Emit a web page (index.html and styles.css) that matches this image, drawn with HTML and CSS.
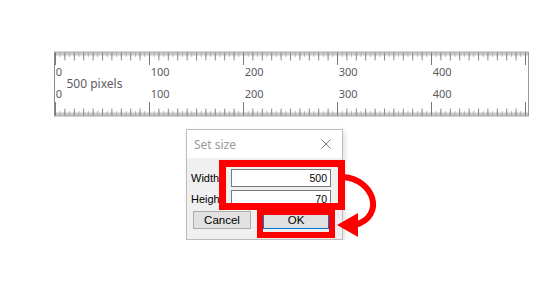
FILE: index.html
```html
<!DOCTYPE html>
<html lang="en">
  <head>
    <meta charset="UTF-8" />
    <title>Ruler - Set size</title>
    <link rel="stylesheet" href="styles.css">
  </head>
  <body>
    <div class="ruler">
      <svg width="475" height="66" viewBox="0 0 475 66">
        <defs>
          <pattern id="tickTiny" x="1" y="0" width="0.94" height="66" patternUnits="userSpaceOnUse">
            <rect x="0" y="1" width="0.5" height="3.5" fill="#9a9a9a" />
            <rect x="0" y="61.5" width="0.5" height="3.5" fill="#9a9a9a" />
          </pattern>
          <pattern id="tickFive" x="1" y="0" width="4.7" height="66" patternUnits="userSpaceOnUse">
            <rect x="0" y="1" width="0.7" height="5" fill="#a0a0a0" />
            <rect x="0" y="60" width="0.7" height="5" fill="#a0a0a0" />
          </pattern>
          <pattern id="tickTen" x="1" y="0" width="9.4" height="66" patternUnits="userSpaceOnUse">
            <rect x="0" y="1" width="1" height="8.5" fill="#8c8c8c" />
            <rect x="0" y="57.5" width="1" height="7.5" fill="#8c8c8c" />
          </pattern>
          <pattern id="tickHundred" x="1" y="0" width="94" height="66" patternUnits="userSpaceOnUse">
            <rect x="0" y="1" width="1" height="13" fill="#7a7a7a" />
            <rect x="0" y="51" width="1" height="14" fill="#7a7a7a" />
          </pattern>
        </defs>
        <rect x="0" y="0" width="475" height="66" fill="#fff" />
        <rect x="0" y="0" width="475" height="66" fill="url(#tickTiny)" />
        <rect x="0" y="0" width="475" height="66" fill="url(#tickFive)" />
        <rect x="0" y="0" width="475" height="66" fill="url(#tickTen)" />
        <rect x="0" y="0" width="475" height="66" fill="url(#tickHundred)" />
        <rect x="0" y="1" width="1" height="64" fill="#8a8a8a" />
        <rect x="474" y="1" width="1" height="64" fill="#9a9a9a" />
        <rect x="0" y="64.5" width="475" height="1" fill="#a5a5a5" />
        <rect x="0" y="0.5" width="475" height="1" fill="#b0b0b0" />

        <g class="tick-label">
          <text x="1.7" y="25">0</text>
          <text x="96.7" y="25">100</text>
          <text x="190.7" y="25">200</text>
          <text x="284.7" y="25">300</text>
          <text x="378.7" y="25">400</text>
          <text x="1.7" y="47">0</text>
          <text x="96.7" y="47">100</text>
          <text x="190.7" y="47">200</text>
          <text x="284.7" y="47">300</text>
          <text x="378.7" y="47">400</text>
        </g>
        <text class="size-label" x="12.5" y="37">500 pixels</text>
      </svg>
    </div>

    <div class="dialog">
      <div class="titlebar">
        <span class="title">Set size</span>
        <svg class="close" width="10" height="10" viewBox="0 0 10 10">
          <path d="M0.5 0.5 L9.5 9.5 M9.5 0.5 L0.5 9.5" stroke="#7c7c7c" stroke-width="1" fill="none" />
        </svg>
      </div>
      <div class="dlg-body">
        <div class="row">
          <span class="field-label">Width:</span>
          <div class="field">500</div>
        </div>
        <div class="row">
          <span class="field-label">Height:</span>
          <div class="field">70</div>
        </div>
        <div class="buttons">
          <button class="btn">Cancel</button>
          <button class="btn btn-default">OK</button>
        </div>
      </div>

      <!-- annotation marks -->
      <div class="mark mark-fields"></div>
      <div class="mark mark-ok"></div>
      <svg class="arrow" width="45" height="85" viewBox="335 160 45 85">
        <path d="M343 177 C374 179 386 216 355 225" stroke="#ff0000" stroke-width="6" fill="none" />
        <polygon points="337,225 358,213 358,237" fill="#ff0000" />
      </svg>
    </div>
  </body>
</html>
```

FILE: styles.css
```css
/* Page */
body {
  margin: 0;
  background-color: #fff;
  font-family: "Noto Sans", "Liberation Sans", sans-serif;
}

/* Ruler strip */
.ruler {
  margin: 51px 0 0 54px;
  width: 475px;
  height: 66px;
}

.ruler svg {
  display: block;
}

.tick-label text {
  font-family: "Noto Sans", sans-serif;
  font-size: 11px;
  fill: #5c5a62;
}

.size-label {
  font-family: "Noto Sans", sans-serif;
  font-size: 12px;
  fill: #5e5c66;
}

/* Set size dialog */
.dialog {
  position: relative;
  margin: 12px 0 0 186px;
  width: 157px;
  height: 111px;
  box-sizing: border-box;
  border: 1px solid #bcbcbc;
  background-color: #f0f0f0;
  box-shadow: 2px 2px 5px rgba(0, 0, 0, 0.12);
}

.titlebar {
  height: 28px;
  background-color: #fff;
  display: flex;
  align-items: center;
  justify-content: space-between;
  padding: 0 11px 0 7px;
}

.title {
  color: #9a9a9a;
  font-size: 12px;
}

.close {
  display: block;
}

.dlg-body {
  padding: 11px 0 0 4px;
}

.row {
  display: flex;
  align-items: center;
  height: 18px;
  margin-bottom: 3px;
}

.field-label {
  width: 40px;
  font-family: "Liberation Sans", sans-serif;
  font-size: 11px;
  color: #000;
  white-space: nowrap;
}

.field {
  width: 100px;
  height: 18px;
  box-sizing: border-box;
  background-color: #fff;
  border: 1px solid #7a7a7a;
  padding-right: 3px;
  text-align: right;
  font-family: "Liberation Sans", sans-serif;
  font-size: 10.5px;
  line-height: 16px;
  color: #000;
}

.buttons {
  display: flex;
  gap: 12px;
  margin: 2px 0 0 2px;
}

.btn {
  width: 58px;
  height: 18px;
  padding: 0;
  background-color: #e1e1e1;
  border: 1px solid #adadad;
  font-family: "Liberation Sans", sans-serif;
  font-size: 11.5px;
  color: #000;
}

.btn-default {
  width: 66px;
  border-color: #0078d7;
}

/* Red annotation marks over the dialog */
.mark {
  position: absolute;
  box-sizing: border-box;
  border: 7px solid #ff0000;
}

.mark-fields {
  left: 32px;
  top: 30px;
  width: 126px;
  height: 50px;
}

.mark-ok {
  left: 70px;
  top: 79px;
  width: 78px;
  height: 29px;
  border-width: 6px;
}

.arrow {
  position: absolute;
  left: 148px;
  top: 30px;
  overflow: visible;
}
```
